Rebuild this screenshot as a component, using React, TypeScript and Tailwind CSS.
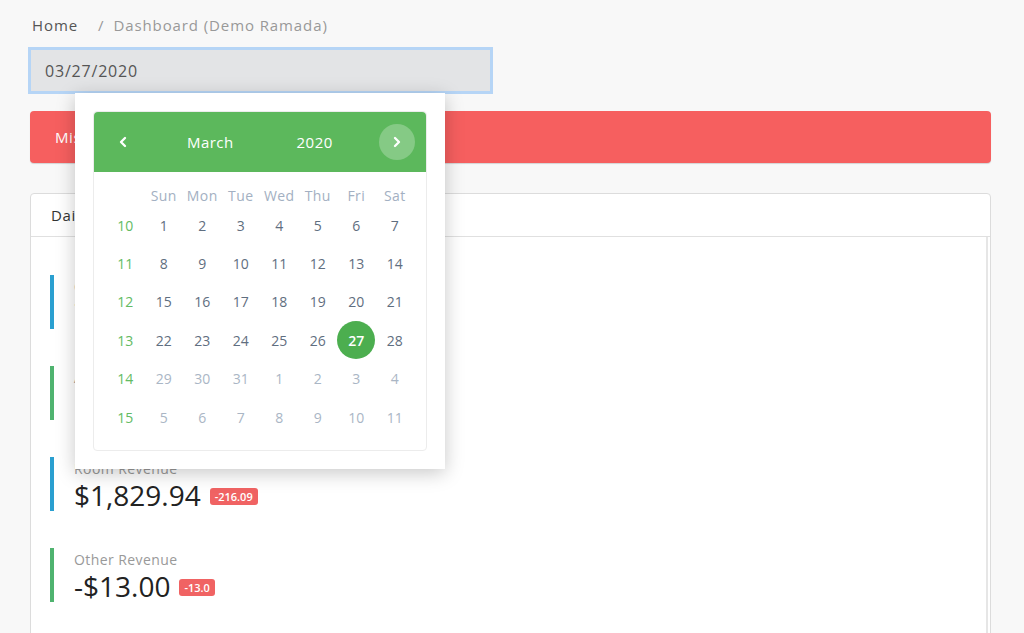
import { ChevronLeft, ChevronRight } from 'lucide-react'

const font = { fontFamily: '"Open Sans", "Noto Sans", sans-serif' }

const weekDays = ['Sun', 'Mon', 'Tue', 'Wed', 'Thu', 'Fri', 'Sat']

// semana ISO + dias (false = deshabilitado / fuera del mes)
const weeks: { num: number; days: [number, boolean][] }[] = [
  { num: 10, days: [[1, true], [2, true], [3, true], [4, true], [5, true], [6, true], [7, true]] },
  { num: 11, days: [[8, true], [9, true], [10, true], [11, true], [12, true], [13, true], [14, true]] },
  { num: 12, days: [[15, true], [16, true], [17, true], [18, true], [19, true], [20, true], [21, true]] },
  { num: 13, days: [[22, true], [23, true], [24, true], [25, true], [26, true], [27, true], [28, true]] },
  { num: 14, days: [[29, false], [30, false], [31, false], [1, false], [2, false], [3, false], [4, false]] },
  { num: 15, days: [[5, false], [6, false], [7, false], [8, false], [9, false], [10, false], [11, false]] },
]

const stats = [
  { label: 'Occupancy', value: '71.4%', badge: '-4.2', bar: 'bg-[#2a9fd0]' },
  { label: 'ADR', value: '$96.12', badge: '-3.1', bar: 'bg-[#4fb36f]' },
  { label: 'Room Revenue', value: '$1,829.94', badge: '-216.09', bar: 'bg-[#2a9fd0]' },
  { label: 'Other Revenue', value: '-$13.00', badge: '-13.0', bar: 'bg-[#4fb36f]' },
]

function Calendar() {
  return (
    <div className="absolute left-[47px] top-[46px] z-10 w-[370px] bg-white p-[18px] shadow-[0_4px_18px_rgba(0,0,0,0.22)]">
      <div className="rounded-[4px] border border-[#ececec] bg-white">
        <div className="flex h-[60px] items-center rounded-t-[4px] bg-[#5cb85c] px-[11px] text-[15px] font-medium tracking-[0.03em] text-white">
          <button className="flex h-9 w-9 items-center justify-center rounded-full">
            <ChevronLeft size={16} strokeWidth={3.5} />
          </button>
          <span className="ml-[46px]">March</span>
          <span className="ml-[63px]">2020</span>
          <button className="ml-auto flex h-9 w-9 items-center justify-center rounded-full bg-white/25">
            <ChevronRight size={16} strokeWidth={3.5} />
          </button>
        </div>
        <div className="px-[12px] pb-[14px] pt-[12px]">
          <div className="grid grid-cols-8 text-center text-[14px] tracking-[0.03em] text-[#a3b0c2]">
            <div />
            {weekDays.map((d) => (
              <div key={d} className="h-[22px] leading-[24px]">{d}</div>
            ))}
          </div>
          {weeks.map((w) => (
            <div key={w.num} className="grid grid-cols-8 text-center text-[14px]">
              <div className="flex h-[38.4px] items-center justify-center text-[#63bb63]">{w.num}</div>
              {w.days.map(([d, enabled], i) => {
                const selected = enabled && d === 27
                return (
                  <div key={i} className="flex h-[38.4px] items-center justify-center">
                    {selected ? (
                      <span className="flex h-[38px] w-[38px] items-center justify-center rounded-full bg-[#4cae4f] font-semibold text-white">
                        {d}
                      </span>
                    ) : (
                      <span className={enabled ? 'text-[#5f6e80]' : 'text-[#aab6c5]'}>{d}</span>
                    )}
                  </div>
                )
              })}
            </div>
          ))}
        </div>
      </div>
    </div>
  )
}

export default function App() {
  return (
    <div className="min-h-[633px] w-full overflow-hidden bg-[#f8f8f8] px-[28px] pt-[14px]" style={font}>
      {/* breadcrumb */}
      <nav className="flex h-[22px] items-center pl-[4px] text-[15px] tracking-[0.06em]">
        <span className="text-[#555]">Home</span>
        <span className="ml-[20px] text-[#999]">/</span>
        <span className="ml-[9px] text-[#999]">Dashboard (Demo Ramada)</span>
      </nav>

      {/* date input + popup */}
      <div className="relative mt-[11px] w-[465px]">
        <div className="flex h-[47px] items-center border-[3px] border-[#b6d5f6] bg-[#e3e4e6] pl-[14px] text-[16px] tracking-[0.05em] text-[#555]">
          03/27/2020
        </div>
        <Calendar />
      </div>

      <div className="ml-[2px] mr-[5px]">
        {/* alert */}
        <div className="mt-[17px] flex h-[52px] items-center rounded-[4px] bg-[#f65f5f] pl-[25px] text-[15px] font-medium tracking-[0.04em] text-white shadow-[0_1px_1px_rgba(0,0,0,0.15)]">
          Missing night audit
        </div>

        {/* card */}
        <div className="mt-[30px] rounded-[4px] border border-[#dcdcdc] bg-white">
          <div className="flex h-[43px] items-center border-b border-[#e0e0e0] pl-[20px] text-[15px] tracking-[0.04em] text-[#333]">
            Daily
          </div>
          <div className="mr-[2px] flex h-[420px] flex-col gap-[37px] border-r-[2px] border-[#e6e6e6] pl-[19px] pt-[38px]">
            {stats.map((s) => (
              <div key={s.label} className="flex h-[54px] items-stretch">
                <div className={`w-[4px] ${s.bar}`} />
                <div className="flex flex-col pl-[20px] pt-[2px]">
                  <span className="text-[14px] leading-[20px] tracking-[0.03em] text-[#999]">{s.label}</span>
                  <div className="flex items-center">
                    <span className="text-[28px] leading-[32px] text-[#222]">{s.value}</span>
                    <span className="ml-[9px] mt-[3px] rounded-[3px] bg-[#f06363] px-[5px] text-[11px] font-semibold leading-[17px] text-white">
                      {s.badge}
                    </span>
                  </div>
                </div>
              </div>
            ))}
          </div>
        </div>
      </div>
    </div>
  )
}
